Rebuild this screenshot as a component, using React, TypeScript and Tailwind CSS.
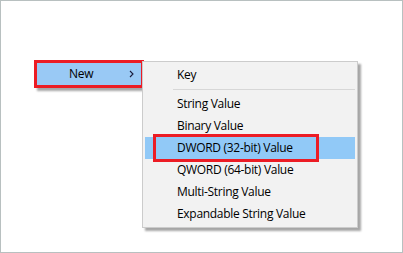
import React from "react";

const items = [
  "String Value",
  "Binary Value",
  "DWORD (32-bit) Value",
  "QWORD (64-bit) Value",
  "Multi-String Value",
  "Expandable String Value",
];

export default function App() {
  return (
    <div
      className="w-[403px] h-[253px] border border-[#b8c0c0] bg-white flex items-start pt-[59px] pl-[33px] text-[12px] tracking-[-0.3px] text-black"
      style={{ fontFamily: '"Open Sans", "Noto Sans", sans-serif' }}
    >
      {/* Parent "New" item */}
      <div className="w-[110px] h-[28px] border-[3px] border-[#ec1c24] bg-[#99c9f5] shadow-[3px_3px_2px_rgba(0,0,0,0.35)] flex items-center pl-[32px] pr-[6px]">
        <span className="flex-1 leading-none">New</span>
        <svg width="5" height="8" viewBox="0 0 5 8" className="mr-[1px]">
          <path d="M1 1 L4 4 L1 7" fill="none" stroke="#1a1a3a" strokeWidth="1.1" />
        </svg>
      </div>

      {/* Submenu */}
      <div className="ml-[-2px] mt-[1px] w-[216px] border border-[#cccccc] bg-[#f2f2f2] shadow-[3px_3px_2px_rgba(0,0,0,0.35)] py-[2px] px-[2px] flex flex-col">
        <div className="h-[22px] flex items-center pl-[32px]">Key</div>
        <div className="h-px bg-[#d7d7d7] ml-[28px] my-[3px]" />
        {items.map((t, i) => {
          const active = i === 2;
          return (
            <div
              key={t}
              className={
                active
                  ? "relative h-[22px] flex items-center pl-[32px] bg-[#91c9f7]"
                  : "relative h-[22px] flex items-center pl-[32px]"
              }
            >
              {t}
              {active && (
                <div className="absolute left-[8px] top-[-3px] w-[166px] h-[28px] border-[3px] border-[#ec1c24]" />
              )}
            </div>
          );
        })}
      </div>
    </div>
  );
}
